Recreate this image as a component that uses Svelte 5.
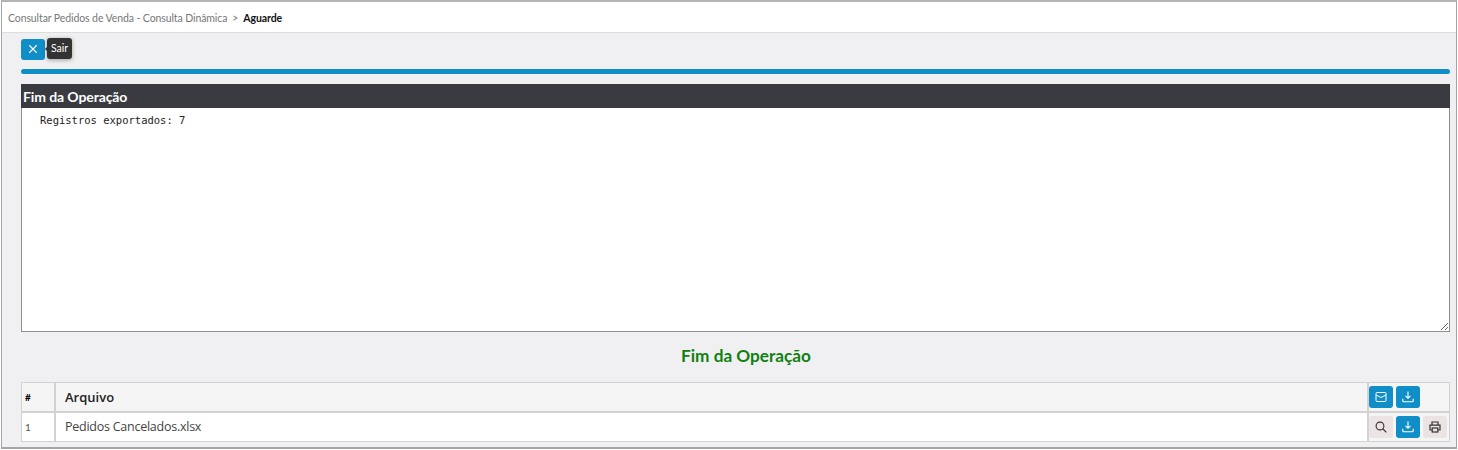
<script>
  const files = [{ id: 1, name: "Pedidos Cancelados.xlsx" }];
</script>

<div class="frame">
  <div class="crumbs">
    <span class="parent">Consultar Pedidos de Venda - Consulta Dinâmica</span>
    <span class="sep">&gt;</span>
    <b>Aguarde</b>
  </div>

  <div class="content">
    <div class="toolbar">
      <button class="btn blue exit" aria-label="Sair">
        <svg width="10" height="10" viewBox="0 0 12 12"><path d="M1.5 1.5l9 9M10.5 1.5l-9 9" stroke="#fff" stroke-width="1.4" fill="none" /></svg>
      </button>
      <div class="tip">Sair</div>
    </div>

    <div class="progress"></div>

    <div class="panel-title">Fim da Operação</div>
    <textarea class="log" readonly>Registros exportados: 7</textarea>

    <h2>Fim da Operação</h2>

    <table>
      <thead>
        <tr>
          <th class="num">#</th>
          <th class="name">Arquivo</th>
          <th class="actions">
            <div class="btns">
              <button class="btn blue" aria-label="E-mail">
                <svg width="12" height="12" viewBox="0 0 12 12" fill="none" stroke="#fff" stroke-width="1"><rect x="1" y="1.5" width="10" height="9" rx="1" /><path d="M1 4l5 2.5L11 4" /></svg>
              </button>
              <button class="btn blue" aria-label="Baixar">
                <svg width="12" height="12" viewBox="0 0 12 12" fill="none" stroke="#fff" stroke-width="1.1"><path d="M6 .5v6.5M3.5 4.8L6 7.2l2.5-2.4M.8 7.8v2a1 1 0 0 0 1 1h8.4a1 1 0 0 0 1-1v-2" /></svg>
              </button>
            </div>
          </th>
        </tr>
      </thead>
      <tbody>
        {#each files as f}
          <tr>
            <td class="num">{f.id}</td>
            <td class="name file">{f.name}</td>
            <td class="actions">
              <div class="btns">
                <button class="btn light" aria-label="Ver">
                  <svg width="12" height="12" viewBox="0 0 12 12" fill="none" stroke="#333" stroke-width="1.1"><circle cx="5" cy="5" r="3.9" /><path d="M8 8l3.3 3.3" /></svg>
                </button>
                <button class="btn blue" aria-label="Baixar">
                  <svg width="12" height="12" viewBox="0 0 12 12" fill="none" stroke="#fff" stroke-width="1.1"><path d="M6 .5v6.5M3.5 4.8L6 7.2l2.5-2.4M.8 7.8v2a1 1 0 0 0 1 1h8.4a1 1 0 0 0 1-1v-2" /></svg>
                </button>
                <button class="btn light" aria-label="Imprimir">
                  <svg width="12" height="12" viewBox="0 0 12 12" fill="none" stroke="#333" stroke-width="1.2"><path d="M3 4V1h6v3M3 9H1V4.2h10V9H9" /><rect x="3.2" y="7" width="5.6" height="4" /></svg>
                </button>
              </div>
            </td>
          </tr>
        {/each}
      </tbody>
    </table>
  </div>
</div>

<style>
  :global(body) {
    background: #fff;
    font-family: Lato, "Liberation Sans", sans-serif;
  }

  .frame {
    box-sizing: border-box;
    width: 1456px;
    height: 449px;
    margin-left: 1px;
    border: 1px solid #a5a5a5;
    border-top: 2px solid #b5b5b5;
    border-bottom: 2px solid #a5a5a5;
    display: flex;
    flex-direction: column;
  }

  .crumbs {
    height: 31px;
    box-sizing: border-box;
    padding: 2px 0 0 6px;
    display: flex;
    align-items: center;
    gap: 5px;
    font-size: 10.5px;
    letter-spacing: -0.1px;
    background: #fff;
    border-bottom: 1px solid #ddd;
    color: #777;
  }

  .crumbs b {
    color: #111;
  }

  .content {
    flex: 1;
    background: #f0f0f2;
    padding: 5px 6px 0 19px;
    display: flex;
    flex-direction: column;
  }

  .toolbar {
    position: relative;
    height: 21px;
  }

  .btn {
    width: 24px;
    height: 22px;
    padding: 0;
    border: 0;
    border-radius: 3px;
    display: inline-flex;
    align-items: center;
    justify-content: center;
  }

  .blue {
    background: #0f8ec8;
  }

  .light {
    background: #ece4e4;
  }

  .exit {
    height: 21px;
  }

  .tip {
    position: absolute;
    left: 26px;
    top: 0;
    width: 25px;
    height: 21px;
    line-height: 21px;
    text-align: center;
    font-size: 10.5px;
    color: #fff;
    background: #333;
    border-radius: 3px;
    box-shadow: 0 1px 4px rgba(0, 0, 0, 0.35);
  }

  .tip::before {
    content: "";
    position: absolute;
    left: -2px;
    top: 9px;
    border: 2px solid transparent;
    border-left: 0;
    border-right-color: #333;
  }

  .progress {
    margin-top: 10px;
    height: 5px;
    border-radius: 3px;
    background: #0f8ec8;
  }

  .panel-title {
    margin-top: 10px;
    height: 24px;
    line-height: 25px;
    padding-left: 2px;
    background: #3a3b40;
    color: #fff;
    font-size: 14px;
    letter-spacing: -0.1px;
    font-weight: 700;
  }

  .log {
    display: block;
    box-sizing: border-box;
    width: 100%;
    height: 224px;
    margin: 0;
    padding: 5px 18px;
    border: 1px solid #8f8f8f;
    border-top: 0;
    border-radius: 0;
    outline: 0;
    resize: both;
    background: #fff;
    color: #222;
    font-family: "DejaVu Sans Mono", monospace;
    font-size: 10.5px;
    line-height: 14px;
  }

  h2 {
    margin: 13px 0 0;
    height: 37px;
    padding-left: 21px;
    text-align: center;
    font-size: 17.2px;
    line-height: 22px;
    font-weight: 700;
    color: #118011;
  }

  table {
    width: 100%;
    border-collapse: collapse;
    table-layout: fixed;
    background: #fff;
  }

  th,
  td {
    border: 1px solid #d2d2d2;
    padding: 0;
    text-align: left;
  }

  thead tr {
    background: #f5f5f5;
    height: 29px;
  }

  tbody tr {
    height: 30px;
  }

  thead th {
    border-bottom-width: 2px;
  }

  .num {
    width: 29px;
    padding-left: 3px;
    font-size: 10px;
    border-right-width: 2px;
  }

  td.num {
    color: #555;
  }

  .name {
    padding-left: 9px;
    font-family: "Open Sans", sans-serif;
    font-size: 13px;
    font-weight: 600;
    color: #222;
  }

  .file {
    font-size: 12.5px;
    font-weight: 400;
    letter-spacing: -0.25px;
    color: #444;
  }

  .actions {
    width: 80px;
    border-left-width: 2px;
    background: #f5f5f5;
  }

  .btns {
    display: flex;
    gap: 3px;
  }
</style>
